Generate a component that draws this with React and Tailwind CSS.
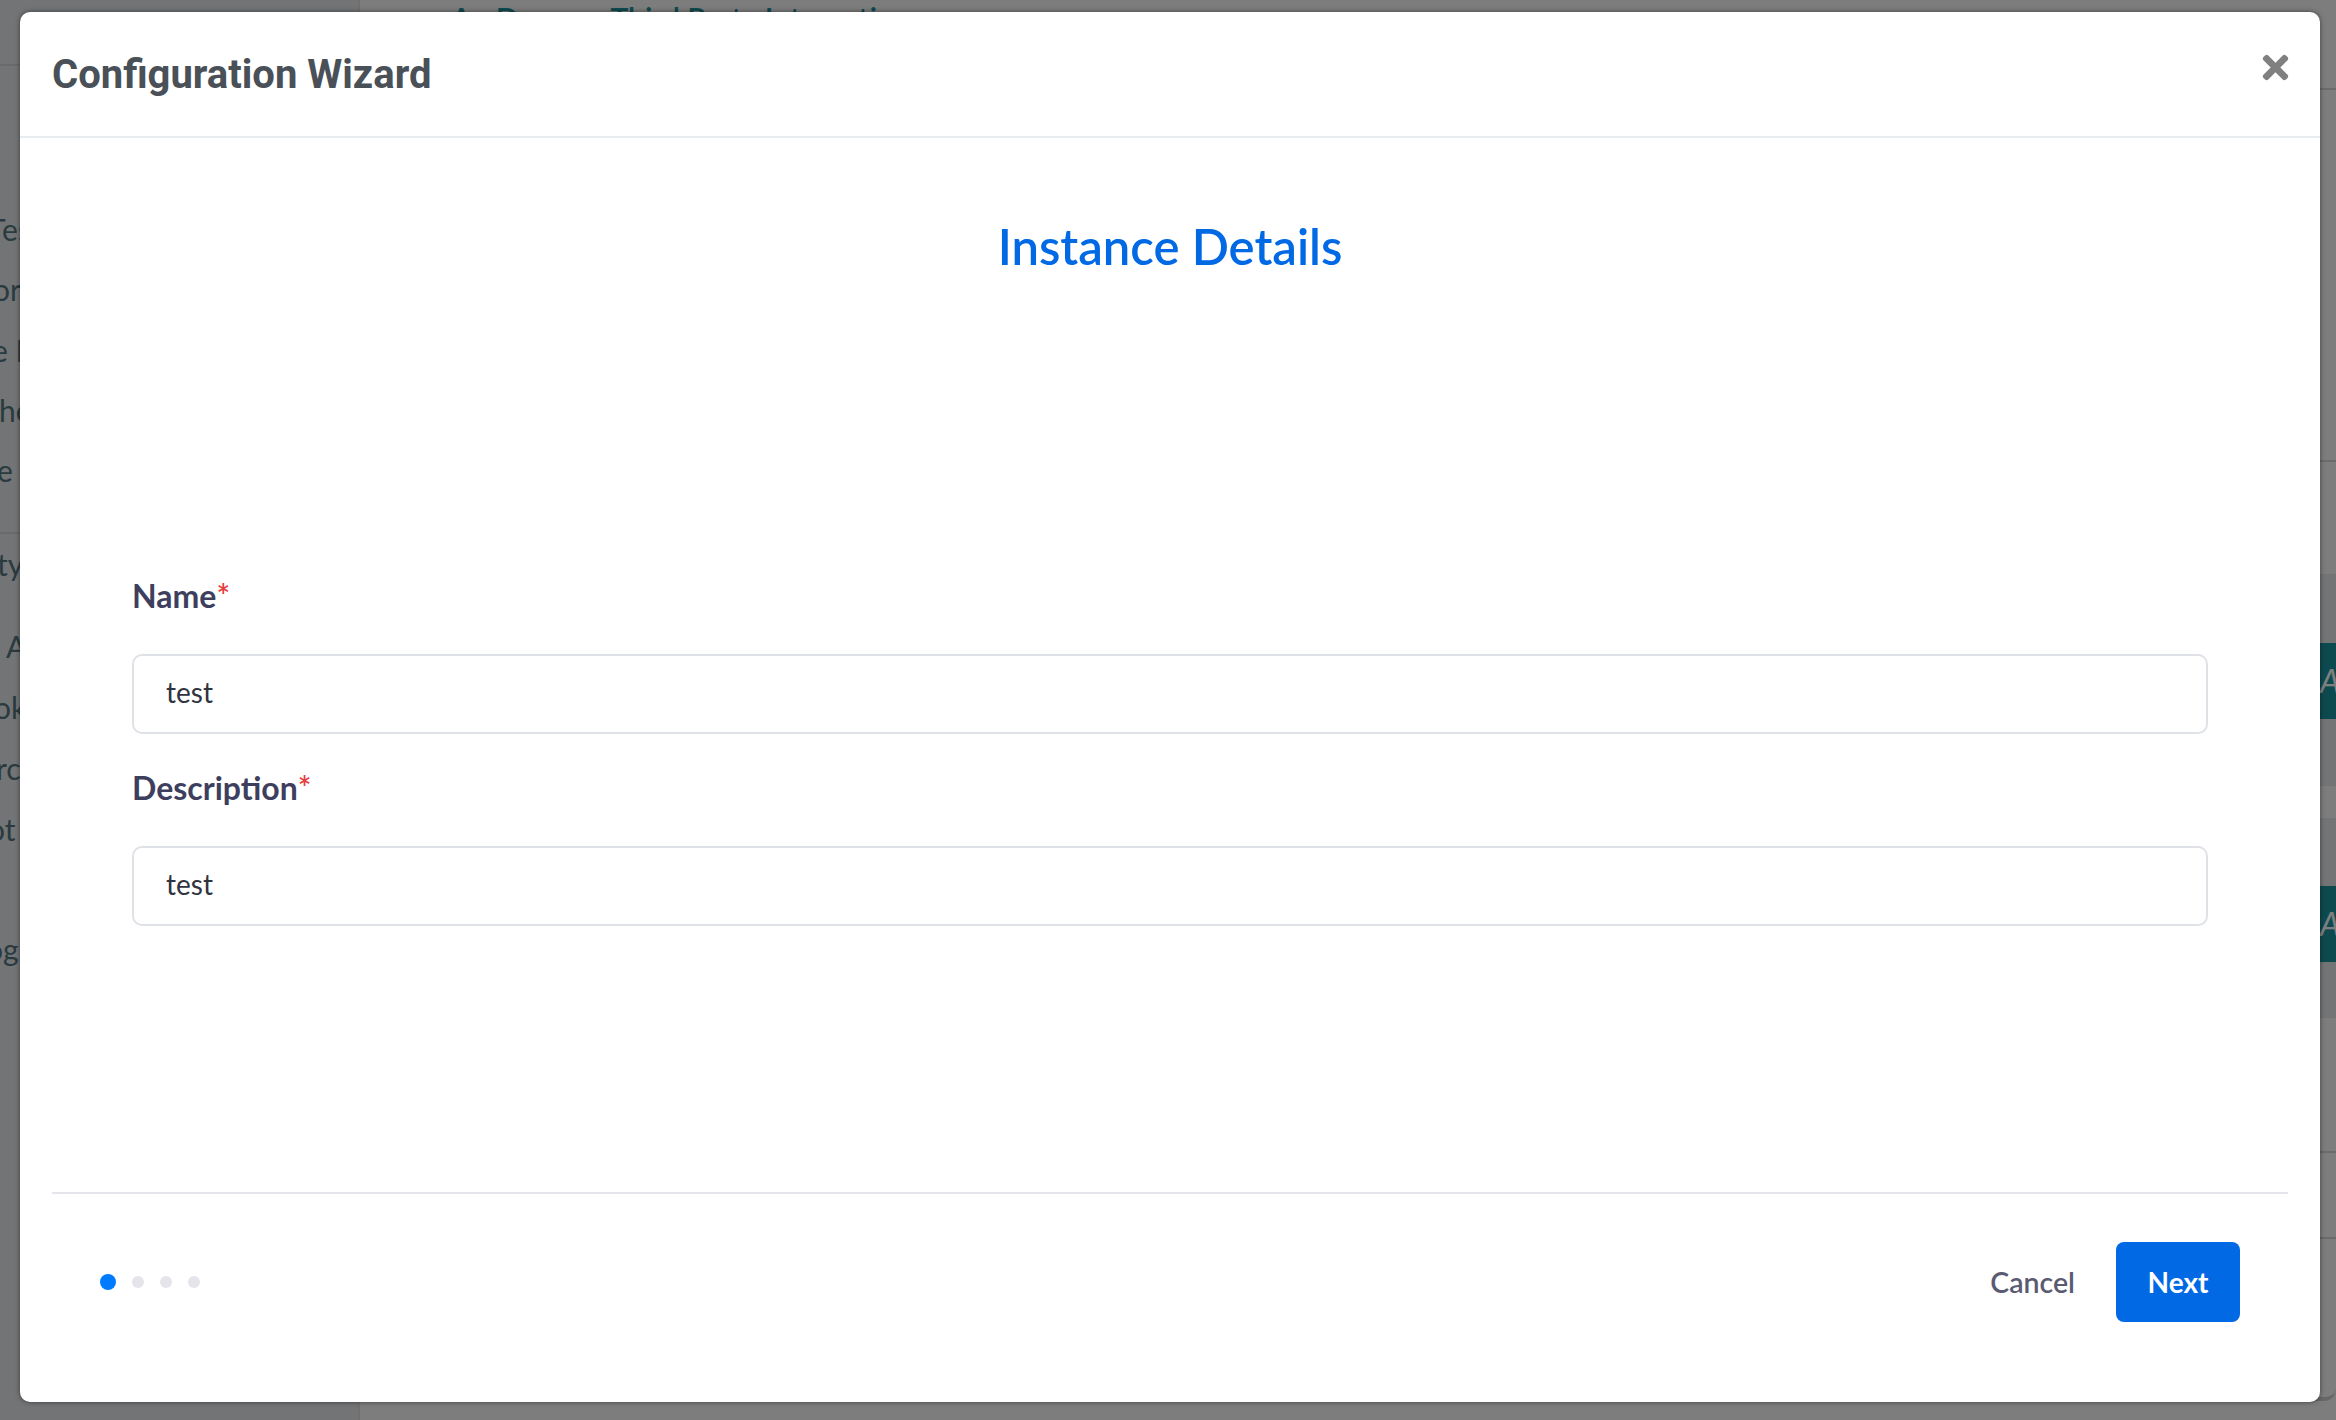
import { FaTimes } from "react-icons/fa";

const body = "font-['Lato','Noto_Sans',sans-serif]";

const Page = () => (
  <div className={`flex h-full w-full bg-[#fafafa] text-[30px] text-[#54767f] ${body}`}>
    {/* sidebar, only a sliver shows beside the modal */}
    <aside className="w-[360px] shrink-0 overflow-hidden bg-[#e6e9ec] border-r-2 border-[#e0e0e0]">
      <div className="h-[66px] border-b-2 border-[#d2d4d6]"></div>
      <div className="flex flex-col pt-[133px] leading-[60.3px] whitespace-nowrap">
        <span className="-ml-[12px]">Test Suite</span>
        <span className="-ml-[7px]">orders</span>
        <span className="-ml-[8px]">e Book</span>
        <span className="-ml-[1px]">here</span>
        <span className="-ml-[3px]">e</span>
      </div>
      <div className="mt-[32px] border-t-2 border-[#d2d4d6] pt-[2px] leading-[56px] whitespace-nowrap">
        <span className="-ml-[3px] block">ty</span>
        <div className="mt-[24px] flex flex-col leading-[61px]">
          <span className="ml-[6px]">Apps</span>
          <span className="-ml-[6px]">ok</span>
          <span className="-ml-[4px]">rc</span>
          <span className="-ml-[12px]">ot</span>
          <span className="-ml-[14px] mt-[59px]">og</span>
        </div>
      </div>
    </aside>
    <main className="flex min-w-0 flex-1 flex-col overflow-hidden">
      <div className="h-[90px] border-b-2 border-[#d6d6d6]">
        <div className="pl-[91px] -mt-[2px] text-[#1a949f] font-semibold leading-[40px] whitespace-nowrap">
          An Demo<span className="ml-[34px]">Third Party Integration</span>
        </div>
      </div>
      <div className="h-[372px] border-b-2 border-[#d6d6d6]"></div>
      <div className="h-[112px]"></div>
      <div className="flex h-[212px] items-start justify-end bg-[#e6e9ec] pt-[69px]">
        <div className="flex h-[76px] w-[300px] items-center bg-[#1a949f] pl-[284px] text-[32px] italic text-white whitespace-nowrap">Add</div>
      </div>
      <div className="h-[32px]"></div>
      <div className="flex h-[200px] items-start justify-end bg-[#e6e9ec] pt-[68px]">
        <div className="flex h-[76px] w-[300px] items-center bg-[#1a949f] pl-[284px] text-[32px] italic text-white whitespace-nowrap">Add</div>
      </div>
      <div className="h-[135px] border-b-2 border-[#d6d6d6]"></div>
      <div className="h-[86px] border-b-2 border-[#d6d6d6]"></div>
      <div className="ml-[80px] h-[162px] rounded-b-xl border-b-4 border-[#cfcfcf]"></div>
    </main>
  </div>
);

const Field = ({ label, value }) => (
  <div className="flex flex-col">
    <label className="text-[32px] leading-[40px] font-bold text-[#3e3f5e]">
      {label}
      <span className="font-semibold text-[#e53e3e]">*</span>
    </label>
    <input
      readOnly
      value={value}
      className="mt-[38px] h-[80px] w-full rounded-[10px] border-2 border-[#dee2e6] bg-white px-[32px] pb-[5px] text-[28px] text-[#2f3440] outline-none"
    />
  </div>
);

export default function App() {
  return (
    <div className="relative h-[1420px] w-[2336px] overflow-hidden">
      <Page />
      <div className="absolute inset-0 bg-black/50">
        <div className={`absolute left-[20px] top-[12px] flex h-[1390px] w-[2300px] flex-col rounded-[10px] bg-white shadow-[0_0_5px_rgba(0,0,0,0.5)] ${body}`}>
          <header className="flex h-[126px] shrink-0 items-start justify-between border-b-2 border-[#e9ecef] pl-[32px] pr-[33px]">
            <h2 className="mt-[38px] font-['Roboto',sans-serif] text-[40px] leading-[50px] font-bold text-[#495057]">
              Configuration Wizard
            </h2>
            <FaTimes className="mt-[37px] -mr-[7px] text-[#808080]" size={37} />
          </header>

          <div className="flex flex-col flex-1 px-[112px]">
            <h1 className="mt-[76px] text-center text-[49px] leading-[64px] font-semibold text-[#0069e3]">
              Instance Details
            </h1>
            <div className="mt-[298px] flex flex-col gap-[34px]">
              <Field label="Name" value="test" />
              <Field label="Description" value="test" />
            </div>
          </div>

          <div className="mx-[32px] flex h-[210px] shrink-0 items-start justify-between border-t-2 border-[#e5e5ec] px-[48px] pt-[48px]">
            <div className="flex h-[80px] items-center gap-[16px]">
              <span className="h-[16px] w-[16px] rounded-full bg-[#007bff]"></span>
              <span className="h-[12px] w-[12px] rounded-full bg-[#e4e4ea]"></span>
              <span className="h-[12px] w-[12px] rounded-full bg-[#e4e4ea]"></span>
              <span className="h-[12px] w-[12px] rounded-full bg-[#e4e4ea]"></span>
            </div>
            <div className="flex items-center gap-[41px]">
              <button className="text-[28.5px] font-semibold text-[#5a5a72]">Cancel</button>
              <button className="h-[80px] w-[124px] rounded-[8px] bg-[#0069e3] text-[28px] font-bold text-white">Next</button>
            </div>
          </div>
        </div>
      </div>
    </div>
  );
}
